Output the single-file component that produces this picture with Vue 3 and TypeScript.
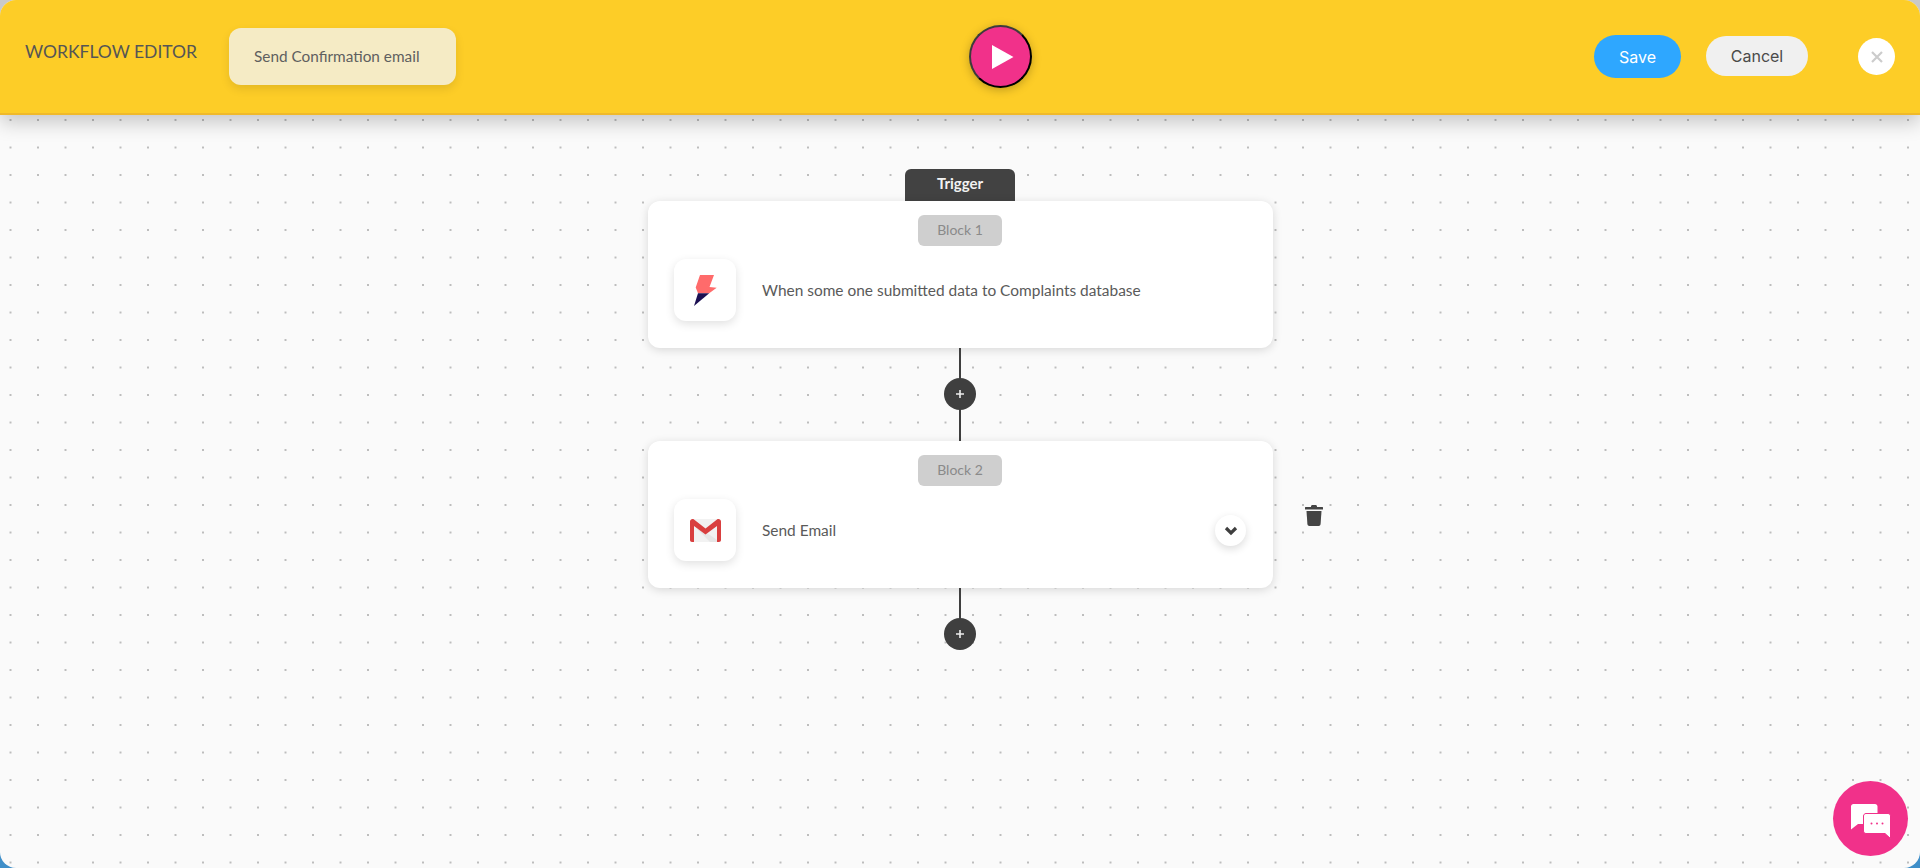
<template>
  <div class="page">
    <header class="topbar">
      <h1 class="title">WORKFLOW EDITOR</h1>
      <div class="name-box">{{ workflowName }}</div>
      <button class="play-btn" aria-label="Run">
        <svg width="22" height="24" viewBox="0 0 22 24"><path d="M0 0 L21.5 12 L0 24 Z" fill="#fff" /></svg>
      </button>
      <button class="btn btn-save">Save</button>
      <button class="btn btn-cancel">Cancel</button>
      <button class="close-btn" aria-label="Close">
        <svg width="14" height="14" viewBox="0 0 14 14"><path d="M2 2 L12 12 M12 2 L2 12" stroke="#ccc" stroke-width="2.2" /></svg>
      </button>
    </header>

    <main class="canvas">
      <div class="trigger-tab">Trigger</div>
      <template v-for="block in blocks" :key="block.id">
        <section class="card">
          <div class="chip">Block {{ block.id }}</div>
          <div class="card-row">
            <div class="tile">
              <svg v-if="block.icon === 'bolt'" width="23" height="31" viewBox="0 0 23 31">
                <path d="M6 0 L20 0 L15.5 12 L22.7 12.7 L15.2 18.300 L4 18.300 L1.700 12.500 Z" fill="#ff6b6b" />
                <path d="M4 18.300 L15.200 18.300 L0 31 Z" fill="#1b0f52" />
              </svg>
              <svg v-else width="31" height="23" viewBox="0 0 31 23">
                <rect x="1" y="0" width="29" height="23" rx="1" fill="#f2f2f2" />
                <path d="M15.500 13 L30 23 L20 23 L6 9 Z" fill="#e6e6e6" />
                <path d="M0 2.500 C0 .5 2.500 -.6 4 .6 L15.500 9.600 L27 .6 C28.500 -.6 31 .5 31 2.500 L31 21 C31 22.200 30.200 23 29 23 L27 23 L27 7 L15.500 15.400 L4 7 L4 23 L2 23 C.8 23 0 22.200 0 21 Z" fill="#d93f3f" />
              </svg>
            </div>
            <p class="card-text">{{ block.text }}</p>
            <button v-if="block.expandable" class="chevron-btn" aria-label="Expand">
              <svg width="14" height="10" viewBox="0 0 14 10"><path d="M2 2 L7 7 L12 2" fill="none" stroke="#3f3f3f" stroke-width="3.2" /></svg>
            </button>
          </div>
          <button v-if="block.expandable" class="trash-btn" aria-label="Delete">
            <svg width="18" height="21" viewBox="0 0 18 21">
              <path d="M6 1.500 C6 .6 6.600 0 7.500 0 L10.500 0 C11.400 0 12 .6 12 1.500 L12 2 L17.500 2 C17.800 2 18 2.300 18 2.600 L18 4.400 L0 4.400 L0 2.600 C0 2.300 .2 2 .5 2 L6 2 Z" fill="#444" />
              <path d="M1.500 6 L16.500 6 L15.600 19 C15.500 20.200 14.700 21 13.600 21 L4.400 21 C3.300 21 2.500 20.200 2.400 19 Z" fill="#444" />
            </svg>
          </button>
        </section>
        <div class="connector">
          <button class="add-btn" aria-label="Add block">
            <svg width="10" height="10" viewBox="0 0 10 10"><path d="M5 1 L5 9 M1 5 L9 5" stroke="#eee" stroke-width="1.6" /></svg>
          </button>
        </div>
      </template>
    </main>

    <button class="chat-btn" aria-label="Chat">
      <svg width="40" height="35" viewBox="0 0 40 35">
        <path d="M2.500 0 L24 0 C25.400 0 26.500 1.100 26.500 2.500 L26.500 20 L7 20 L0 25.500 L0 2.500 C0 1.100 1.100 0 2.500 0 Z" fill="#fff" />
        <path d="M15 9.500 L37 9.500 C38.400 9.500 39.500 10.600 39.500 12 L39.500 34.500 L34 29.500 L15 29.500 C13.600 29.500 12.500 28.400 12.500 27 L12.500 12 C12.500 10.600 13.600 9.500 15 9.500 Z" fill="#fff" stroke="#f1318a" stroke-width="1" />
        <circle cx="20.500" cy="19.500" r="1" fill="#f1318a" />
        <circle cx="26" cy="19.500" r="1" fill="#f1318a" />
        <circle cx="31.500" cy="19.500" r="1" fill="#f1318a" />
      </svg>
    </button>
  </div>
</template>

<script setup lang="ts">
interface Block {
  id: number
  icon: 'bolt' | 'gmail'
  text: string
  expandable: boolean
}

const workflowName = 'Send Confirmation email'

const blocks: Block[] = [
  { id: 1, icon: 'bolt', text: 'When some one submitted data to Complaints database', expandable: false },
  { id: 2, icon: 'gmail', text: 'Send Email', expandable: true },
]
</script>

<style>
html,
body {
  margin: 0;
  height: 100%;
  overflow: hidden;
  background: linear-gradient(to bottom, #c9c9c9 0, #c9c9c9 70%, #3f8fc9 70%, #3f8fc9 100%);
}
</style>

<style scoped>
.page {
  position: relative;
  display: flex;
  flex-direction: column;
  height: 868px;
  overflow: hidden;
  border-radius: 16px;
  background-color: #fafafa;
  background-image: radial-gradient(circle, #5c5c5c 0.45px, transparent 0.85px);
  background-size: 27.5px 27.5px;
  background-position: -3.25px -3.75px;
  font-family: 'Lato', 'Liberation Sans', sans-serif;
}

.topbar {
  display: flex;
  align-items: center;
  height: 115px;
  flex-shrink: 0;
  padding: 0 25px 0 25px;
  box-sizing: border-box;
  background: #fdcd27;
  border-bottom: 2px solid #f0b92a;
  box-shadow: 0 8px 18px rgba(0, 0, 0, 0.2);
  z-index: 2;
}

.title {
  margin: 0 32px 11px 0;
  width: 172px;
  font-size: 17.5px;
  font-weight: 400;
  white-space: nowrap;
  color: #555;
}

.name-box {
  box-sizing: border-box;
  width: 227px;
  height: 57px;
  padding-left: 25px;
  line-height: 57px;
  font-size: 15.35px;
  color: #5f5f5f;
  background: #f5ebc5;
  border-radius: 12px;
  box-shadow: 0 4px 10px rgba(0, 0, 0, 0.1);
}

.play-btn {
  display: flex;
  align-items: center;
  justify-content: center;
  box-sizing: border-box;
  width: 63px;
  height: 63px;
  margin-left: 513px;
  margin-right: auto;
  padding: 0 0 0 5px;
  background: #f1318a;
  border: 2px solid #3c3c3c;
  border-right-color: #000;
  border-bottom-color: #000;
  border-radius: 50%;
  box-shadow: 0 2px 10px rgba(0, 0, 0, 0.25);
}

.btn {
  border: none;
  border-radius: 22px;
  font-family: 'Inter', 'Liberation Sans', sans-serif;
  font-size: 16px;
}

.btn-save {
  width: 87px;
  height: 43px;
  color: #fff;
  background: #2ea7ff;
}

.btn-cancel {
  width: 102px;
  height: 40px;
  margin-left: 25px;
  margin-bottom: 1px;
  color: #4a4a4a;
  background: #f0f0f0;
}

.close-btn {
  display: flex;
  align-items: center;
  justify-content: center;
  width: 37px;
  height: 37px;
  margin-left: 50px;
  padding: 0;
  border: none;
  border-radius: 50%;
  background: #fff;
}

.canvas {
  display: flex;
  flex-direction: column;
  align-items: center;
  padding: 54px 0 0 1px;
}

.trigger-tab {
  box-sizing: border-box;
  width: 110px;
  height: 32px;
  margin-right: 1px;
  padding-top: 5px;
  text-align: center;
  font-size: 15px;
  font-weight: 700;
  color: #f2f2f2;
  background: #424242;
  border-radius: 6px 6px 0 0;
}

.card {
  position: relative;
  box-sizing: border-box;
  display: flex;
  flex-direction: column;
  align-items: center;
  flex-shrink: 0;
  width: 625px;
  height: 147px;
  padding: 14px 1px 0 0;
  background: #fff;
  border-radius: 12px;
  box-shadow: 0 2px 10px rgba(0, 0, 0, 0.14);
}

.chip {
  box-sizing: border-box;
  width: 84px;
  height: 31px;
  line-height: 30px;
  text-align: center;
  font-size: 14px;
  color: #8a8a8a;
  background: #cfcfcf;
  border-radius: 6px;
}

.card-row {
  display: flex;
  align-items: center;
  align-self: stretch;
  margin-top: 13px;
  padding: 0 26px 0 26px;
}

.tile {
  display: flex;
  align-items: center;
  justify-content: center;
  flex-shrink: 0;
  width: 62px;
  height: 62px;
  background: #fff;
  border-radius: 12px;
  box-shadow: 0 3px 10px rgba(0, 0, 0, 0.12);
}

.card-text {
  margin: 0 0 0 26px;
  font-size: 15.45px;
  color: #5a5a5a;
}

.chevron-btn {
  display: flex;
  align-items: center;
  justify-content: center;
  width: 31px;
  height: 31px;
  margin-left: auto;
  padding: 1px 0 0;
  border: none;
  border-radius: 50%;
  background: #fff;
  box-shadow: 0 3px 9px rgba(0, 0, 0, 0.14);
}

.trash-btn {
  position: absolute;
  left: 657px;
  top: 64px;
  padding: 0;
  border: none;
  background: none;
  line-height: 0;
}

.connector {
  position: relative;
  display: flex;
  align-items: center;
  justify-content: center;
  flex-shrink: 0;
  width: 2px;
  height: 93px;
  margin-right: 1px;
  background: #3f3f3f;
}

.connector:last-child {
  height: 46px;
  align-items: flex-end;
}

.add-btn {
  display: flex;
  align-items: center;
  justify-content: center;
  flex-shrink: 0;
  width: 32px;
  height: 32px;
  margin-top: -1px;
  padding: 0;
  border: none;
  border-radius: 50%;
  background: #3f3f3f;
}

.connector:last-child .add-btn {
  margin-bottom: -16px;
}

.chat-btn {
  position: absolute;
  left: 1833px;
  top: 781px;
  display: flex;
  align-items: center;
  justify-content: center;
  width: 75px;
  height: 75px;
  padding: 6px 0 0;
  border: none;
  border-radius: 50%;
  background: #f1318a;
}
</style>
